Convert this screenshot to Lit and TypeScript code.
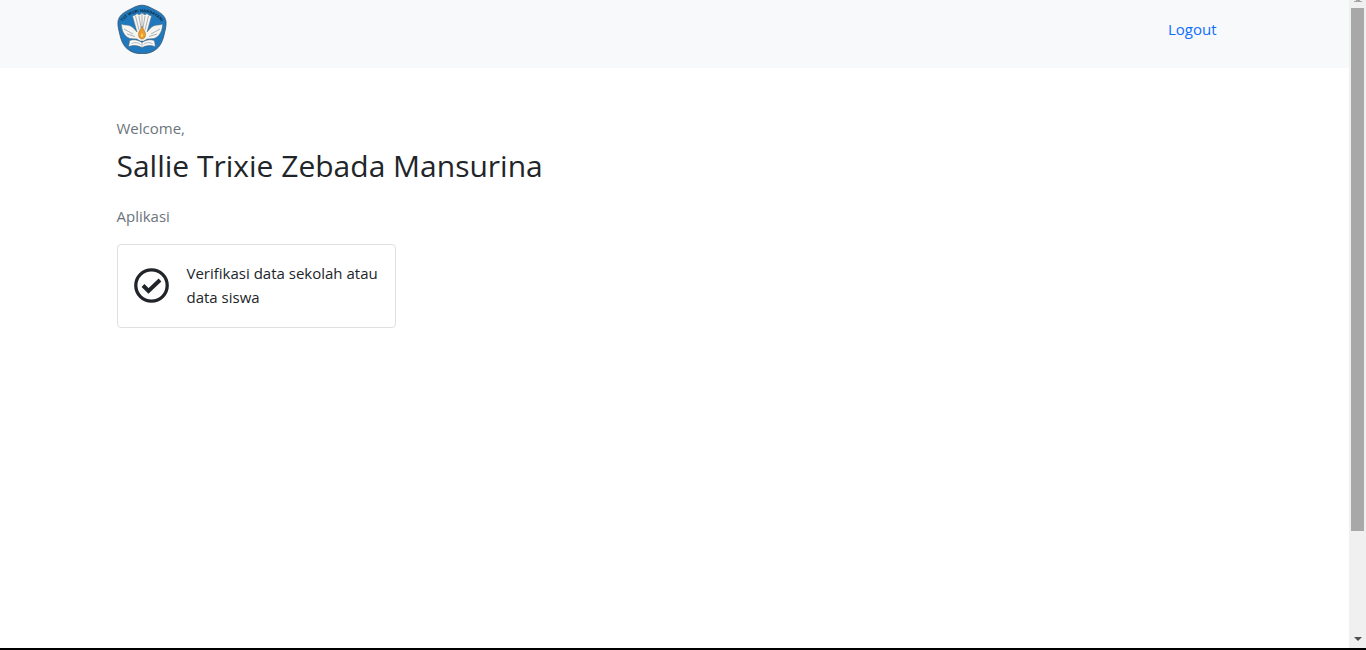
import { LitElement, html, css, svg } from "lit";
import { customElement, state } from "lit/decorators.js";

const emblem = svg`
  <path d="M25 1.200C30 1.200 33.600 3.800 39 6.400C43.500 8.600 48.300 12 49 17.500C49.400 22 48.200 26 47 31C45.800 36 44 41.500 39.500 45C35.500 48.500 30.500 49.700 25 49.700C19.500 49.700 14.500 48.500 10.500 45C6 41.500 4.200 36 3 31C1.800 26 .6 22 1 17.500C1.700 12 6.500 8.600 11 6.400C16.400 3.800 20 1.200 25 1.200Z" fill="#2079bd" stroke="#36536b" stroke-width=".8"/>
  <path id="motto" d="M4.500 19.500C9.500 11.500 17 8 25 8S40.500 11.500 45.500 19.500" fill="none"/>
  <text class="motto" text-anchor="middle"><textPath href="#motto" startOffset="50%">TUT WURI HANDAYANI</textPath></text>
  <path d="M4.500 20C7 21.500 10.500 20.500 13.500 22C16.500 23.500 18 26 20 28L15.500 12L18.500 11L20 9.500L22 11L25 9L28 11L30 9.500L31.500 11L34.500 12L30 28C32 26 33.500 23.500 36.500 22C39.500 20.500 43 21.500 45.500 20C45.500 26 43 32.500 37 34.500L30 35L27 37H23L20 35L13 34.500C7 32.500 4.500 26 4.500 20Z" fill="#f7f5ef" stroke="#5c7180" stroke-width=".5"/>
  <path d="M18.500 12L22 26M22 12L24 24M25 10V24M28 12L26 24M31.500 12L28 26M7 25L16 30M10 30L18 32.500M43 25L34 30M40 30L32 32.500" fill="none" stroke="#8995a0" stroke-width=".7"/>
  <path d="M25 22C25.500 25 28.600 27 28.500 30.500C28.500 33.500 27 35 25 35S21.500 33.500 21.500 30.500C21.400 27 24.500 25 25 22Z" fill="#f29b27" stroke="#7d6540" stroke-width=".5"/>
  <path d="M25 29C26.500 31 26.300 32.500 25 33C23.700 32.500 23.500 31 25 29Z" fill="#f7dc65"/>
  <path d="M12.500 36.500C17 34.800 21.500 36 25 38.500C28.500 36 33 34.800 37.500 36.500L38.500 43C33.500 40.700 29 41.500 25 43.800C21 41.500 16.500 40.700 11.500 43Z" fill="#fafafa" stroke="#48667c" stroke-width=".7"/>
  <path d="M25 38.500V43.500M14.500 39.500C18 38 21.500 38.500 23.500 40.500M35.500 39.500C32 38 28.500 38.500 26.500 40.500" fill="none" stroke="#7f8a94" stroke-width=".6"/>
`;

@customElement("app-root")
export class AppRoot extends LitElement {
  @state() private name = "Sallie Trixie Zebada Mansurina";

  static styles = css`
    :host {
      display: grid;
      grid-template-columns: minmax(0, 1fr) 17px;
      box-sizing: border-box;
      min-height: 100vh;
      border-bottom: 2px solid #000;
      background: #fff;
      color: #212529;
      font: 15px/24px "Segoe UI", "Open Sans", sans-serif;
    }
    * { box-sizing: border-box; }
    a { color: inherit; text-decoration: none; }
    .container {
      width: 100%;
      max-width: 1140px;
      margin: 0 auto;
      padding: 0 12px;
    }
    .navbar { background: #f8f9fb; padding: 4px 0 14px; }
    .bar {
      display: flex;
      align-items: center;
      justify-content: space-between;
    }
    .brand { display: block; height: 50px; }
    .brand svg { display: block; width: 50px; height: 50px; }
    .motto { font: 700 4px "Open Sans", sans-serif; fill: #10283a; }
    .logout { padding: 8px 16px; color: #0d6efd; }
    .content { padding-top: 48px; }
    .muted { margin: 0; color: #6c757d; }
    .name {
      margin: 7px 0 19px;
      font-size: 30px;
      line-height: 38px;
      font-weight: 400;
    }
    .apps { display: grid; grid-template-columns: repeat(4, minmax(0, 1fr)); margin-top: 16px; }
    .card {
      display: flex;
      align-items: center;
      gap: 18px;
      padding: 16px 8px 18px 16px;
      border: 1px solid #dfdfdf;
      border-radius: 4px;
    }
    .check { flex: none; width: 35px; height: 35px; }
    .scroll {
      display: flex;
      flex-direction: column;
      align-items: center;
      background: #f0f0f0;
    }
    .up { height: 8px; width: 8px; }
    .thumb { width: 13px; flex: 523; background: #a8a8a8; }
    .rest { flex: 105; }
    .down { height: 12px; width: 8px; }
  `;

  render() {
    return html`
      <div>
        <header class="navbar">
          <nav class="container bar">
            <a class="brand" href="#" aria-label="Tut Wuri Handayani"><svg viewBox="0 0 50 50">${emblem}</svg></a>
            <a class="logout" href="#">Logout</a>
          </nav>
        </header>
        <main class="container content">
          <p class="muted">Welcome,</p>
          <h2 class="name">${this.name}</h2>
          <p class="muted">Aplikasi</p>
          <div class="apps">
            <a class="card" href="#">
              <svg class="check" viewBox="0 0 35 35" fill="none" stroke="#212529" aria-hidden="true">
                <circle cx="17.500" cy="17.500" r="15.700" stroke-width="3.300"/>
                <path d="M9 17.500L14.500 23L26 12" stroke-width="4"/>
              </svg>
              <span>Verifikasi data sekolah atau data siswa</span>
            </a>
          </div>
        </main>
      </div>
      <div class="scroll" aria-hidden="true">
        <svg class="up" viewBox="0 0 8 8"><path d="M2 0H6V1H8V2H0V1H2Z" fill="#a3a3a3"/></svg>
        <div class="thumb"></div>
        <div class="rest"></div>
        <svg class="down" viewBox="0 0 8 12"><path d="M0 1H8L4 5Z" fill="#505050"/></svg>
      </div>
    `;
  }
}
